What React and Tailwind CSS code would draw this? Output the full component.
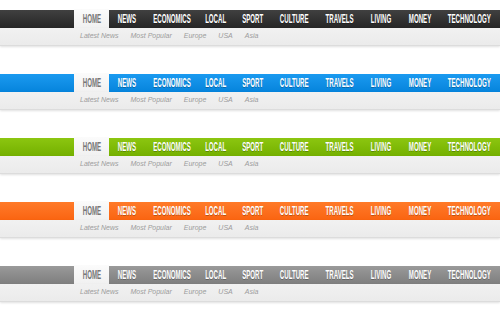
const items = [
  { label: "NEWS", w: "w-[36px]" },
  { label: "ECONOMICS", w: "w-[53px]" },
  { label: "LOCAL", w: "w-[36px]" },
  { label: "SPORT", w: "w-[38px]" },
  { label: "CULTURE", w: "w-[45px]" },
  { label: "TRAVELS", w: "w-[45px]" },
  { label: "LIVING", w: "w-[38px]" },
  { label: "MONEY", w: "w-[40px]" },
  { label: "TECHNOLOGY", w: "w-[58px]" },
];

const subLinks = ["Latest News", "Most Popular", "Europe", "USA", "Asia"];

const themes = [
  "bg-gradient-to-b from-[#404040] to-[#262626]",
  "bg-gradient-to-b from-[#1a9af0] to-[#0584dc]",
  "bg-gradient-to-b from-[#8cc610] to-[#74b000]",
  "bg-gradient-to-b from-[#ff7a28] to-[#fa6410]",
  "bg-gradient-to-b from-[#9a9a9a] to-[#7e7e7e]",
];

function NavBar({ theme }) {
  return (
    <div className="flex flex-col">
      <div className="flex h-[19px]">
        <div className={`w-[74px] mt-px ${theme}`}></div>
        <div className="w-[35px] flex items-center justify-center bg-gradient-to-b from-[#fbfbfb] to-[#f1f1f1] pt-px">
          <span className="inline-block scale-x-[0.51] whitespace-nowrap text-[12px] font-bold text-[#777]">HOME</span>
        </div>
        <div className={`flex-1 mt-px flex ${theme}`}>
          {items.map((it) => (
            <div key={it.label} className={`${it.w} flex items-center justify-center`}>
              <span className="inline-block scale-x-[0.51] whitespace-nowrap text-[12px] font-bold text-white [text-shadow:0_1px_0_rgba(0,0,0,0.25)]">
                {it.label}
              </span>
            </div>
          ))}
        </div>
      </div>
      <div className="h-[18px] flex items-center gap-[12px] pl-[80px] bg-gradient-to-b from-[#f1f1f1] to-[#ebebeb] border-b border-[#dcdcdc] shadow-[0_1px_2px_rgba(0,0,0,0.12)]">
        {subLinks.map((s) => (
          <span key={s} className="text-[7px] italic text-[#9c9c9c] whitespace-nowrap">
            {s}
          </span>
        ))}
      </div>
    </div>
  );
}

export default function App() {
  return (
    <div className="w-[500px] h-[315px] bg-white pt-[9px] flex flex-col gap-[27px] overflow-hidden font-['Liberation_Sans',Arial,sans-serif]">
      {themes.map((t, i) => (
        <NavBar key={i} theme={t} />
      ))}
    </div>
  );
}
